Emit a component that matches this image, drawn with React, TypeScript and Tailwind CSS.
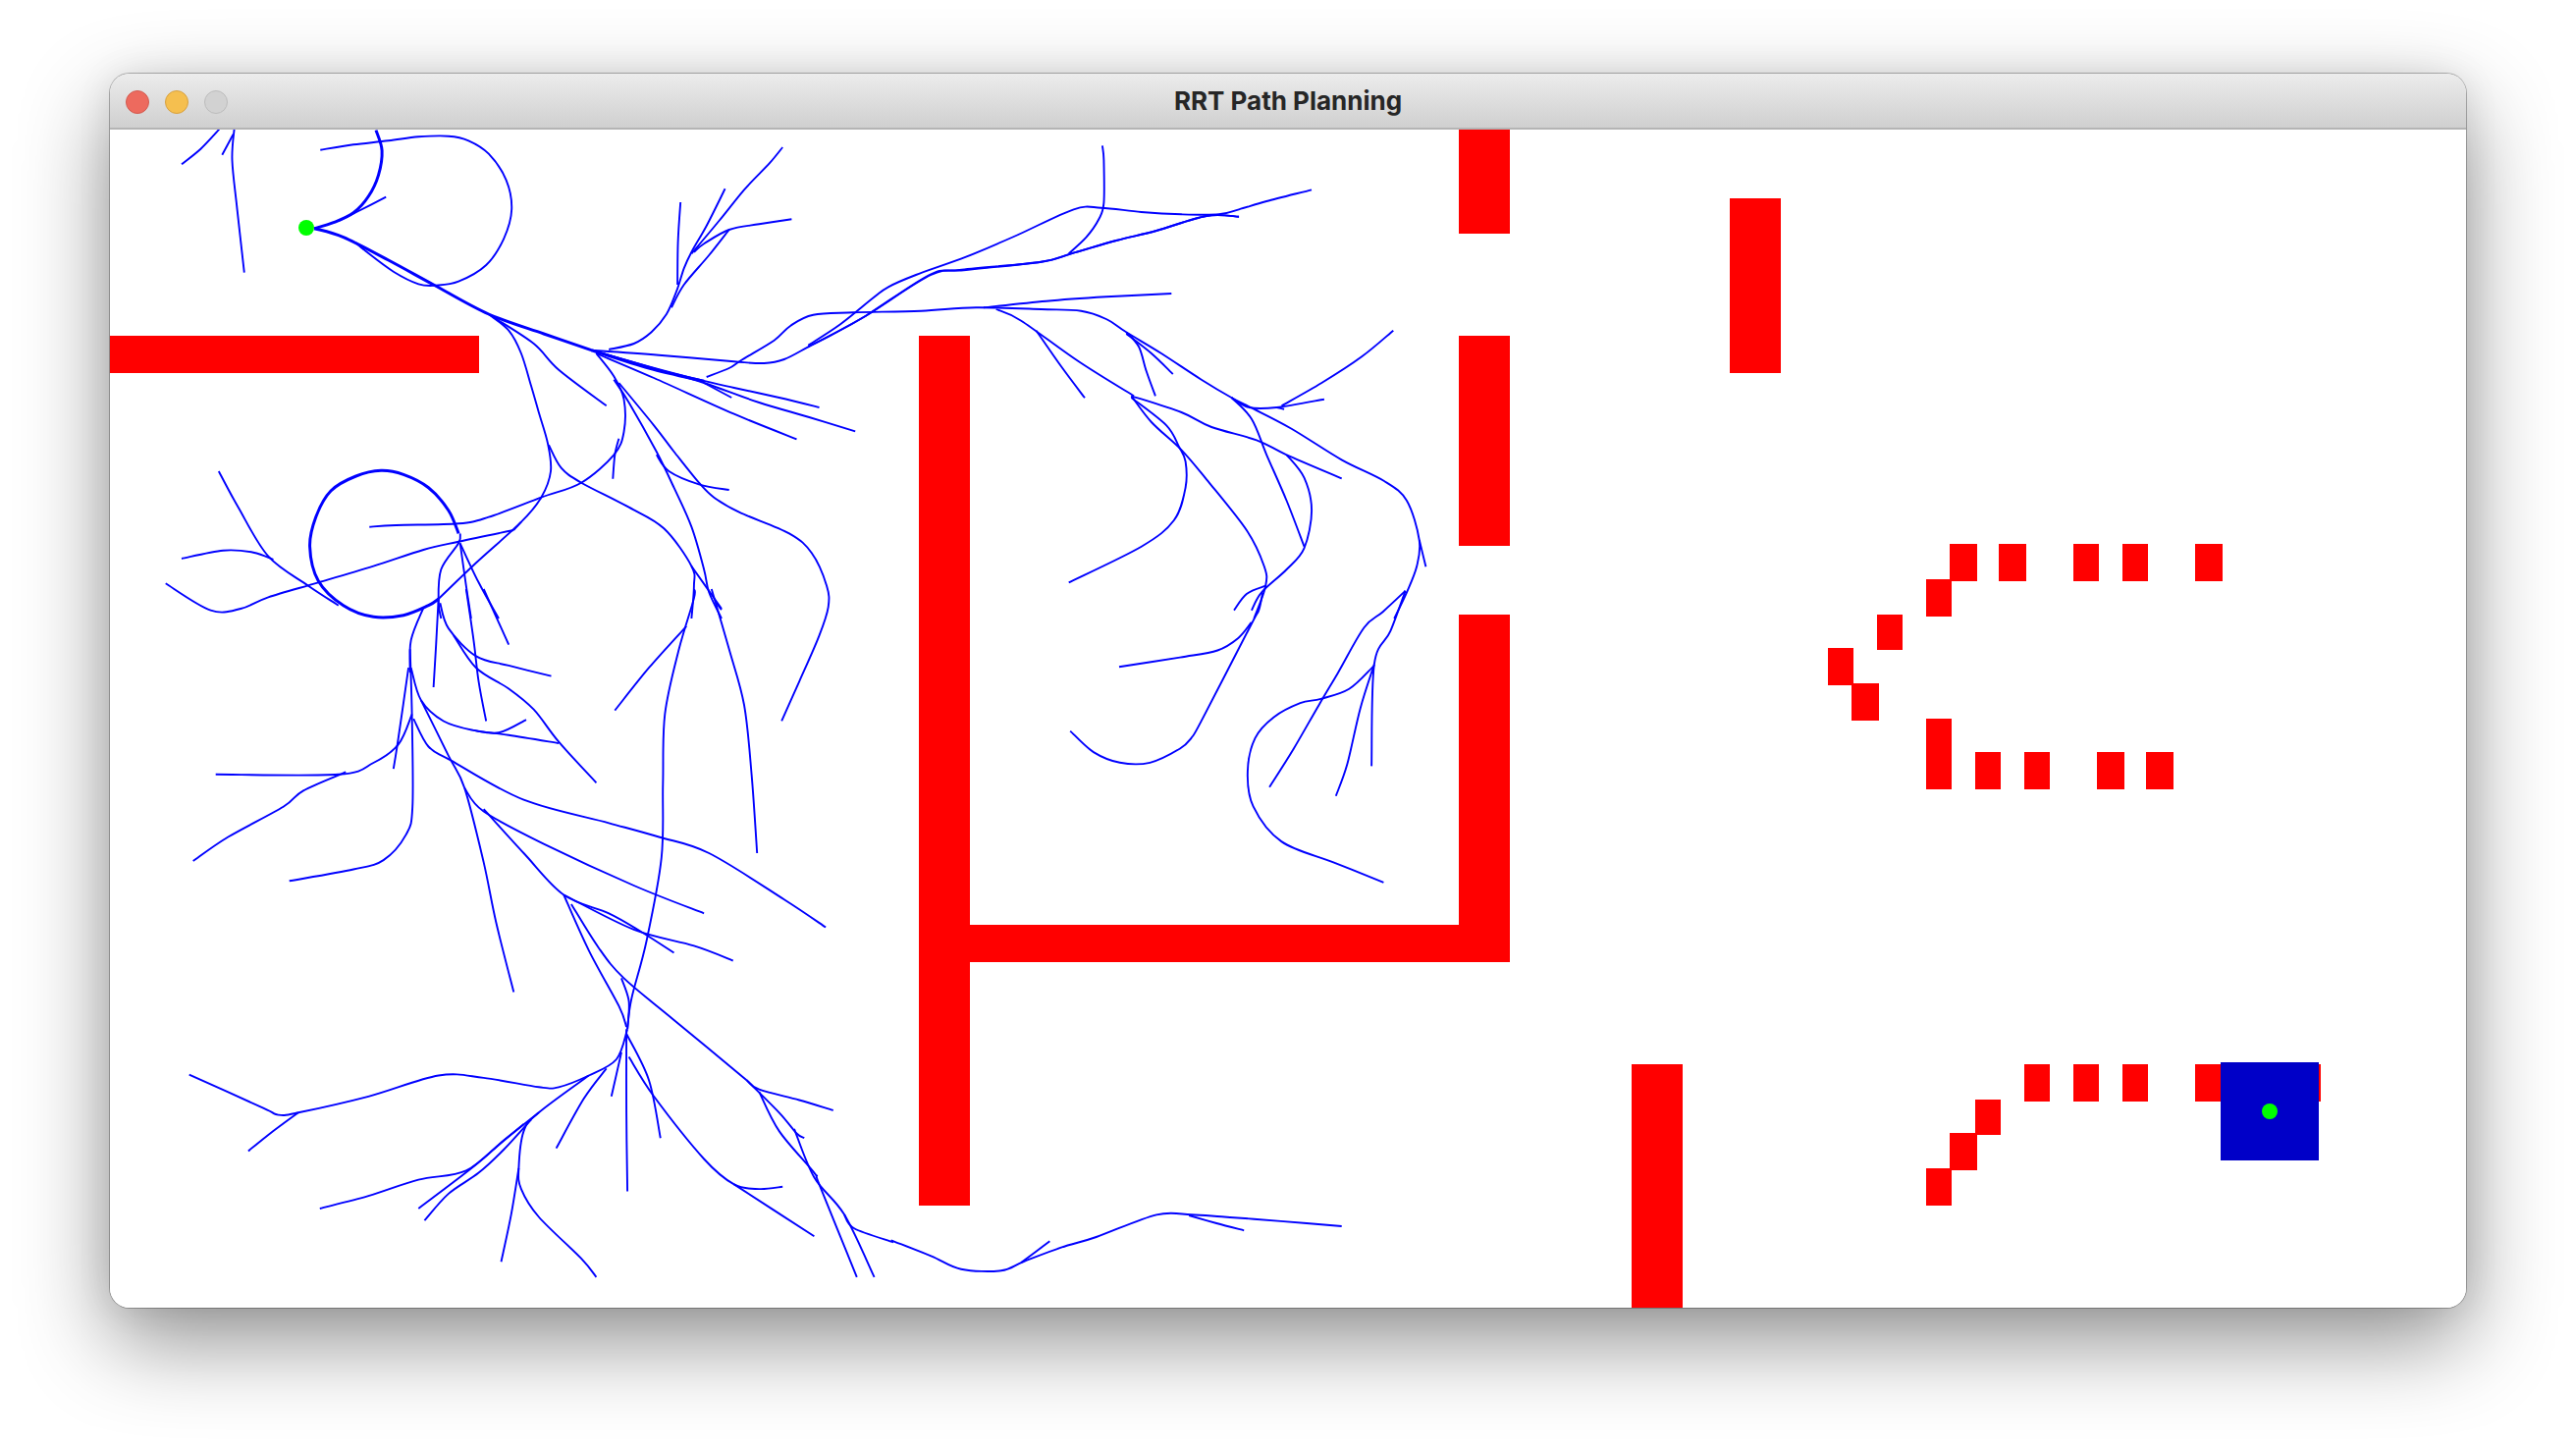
type Pt = [number, number]

// tree branches are noted per zoomed crop, then mapped to page pixels
const z2 = (p: Pt[]): Pt[] => p.map(([x, y]) => [110 + x / 1.96, 130 + y / 3])
const z3 = (p: Pt[]): Pt[] => p.map(([x, y]) => [110 + x / 1.96, 600 + y / 2.119])
const z4 = (p: Pt[]): Pt[] => p.map(([x, y]) => [780 + x / 1.96, 130 + y / 3])
const z5 = (p: Pt[]): Pt[] => p.map(([x, y]) => [980 + x / 2.613, 400 + y / 2.8])
const z6 = (p: Pt[]): Pt[] => p.map(([x, y]) => [780 + x / 1.96, 1000 + y / 3])

const thin: Pt[][] = [
  // top left
  z2([[222, 5], [185, 65], [147, 112]]),
  z2([[252, 5], [248, 100], [258, 250], [272, 443]]),
  z2([[250, 20], [228, 83]]),
  z2([[460, 285], [500, 255], [555, 212]]),
  z2([[424, 68], [490, 52], [560, 40], [620, 28], [680, 26], [720, 40], [760, 80], [795, 160], [806, 250], [790, 340], [755, 420], [700, 470], [655, 482], [620, 478], [570, 440], [515, 378], [495, 352]]),
  // hub, up and right
  z2([[1000, 678], [1050, 660], [1085, 625], [1115, 570], [1135, 500], [1150, 430], [1165, 380], [1195, 300], [1232, 187]]),
  z2([[1143, 228], [1138, 350], [1137, 480]]),
  z2([[1347, 60], [1320, 110], [1270, 190], [1220, 285], [1165, 385]]),
  z2([[1365, 280], [1300, 295], [1240, 312], [1190, 355], [1170, 380]]),
  z2([[1240, 312], [1200, 390], [1150, 480], [1125, 550]]),
  z2([[965, 680], [1100, 695], [1250, 715], [1310, 720], [1350, 708], [1398, 670], [1443, 635], [1513, 575], [1640, 450], [1700, 435], [1863, 410], [1923, 385], [2013, 345], [2093, 315], [2193, 270], [2258, 272]]),
  z2([[1195, 762], [1240, 735], [1265, 710], [1330, 650], [1363, 605], [1408, 572], [1488, 565], [1623, 560], [1733, 550], [1863, 555], [1943, 560], [1993, 585], [2033, 625], [2103, 690], [2183, 770], [2243, 825], [2288, 860], [2363, 920], [2463, 1015], [2548, 1080], [2593, 1140], [2618, 1260], [2613, 1340], [2593, 1420], [2568, 1500]]),
  z2([[1398, 665], [1463, 600], [1528, 520], [1558, 487], [1613, 450], [1713, 395], [1813, 330], [1928, 250], [1983, 245], [2063, 258], [2143, 265], [2218, 265], [2258, 250], [2313, 225], [2403, 190]]),
  z2([[1190, 780], [1245, 825]]),
  z2([[965, 680], [1080, 730], [1180, 770], [1250, 795], [1340, 825], [1420, 855]]),
  z2([[965, 680], [1100, 740], [1190, 780], [1300, 840], [1400, 885], [1492, 928]]),
  z2([[975, 690], [1090, 765], [1250, 875], [1375, 952]]),
  // down from the first fork
  z2([[760, 570], [800, 620], [825, 690], [845, 790], [860, 870], [878, 965], [884, 1050], [865, 1130], [825, 1205], [735, 1330], [660, 1440]]),
  z2([[770, 580], [850, 660], [900, 740], [995, 850]]),
  z2([[975, 690], [1010, 760], [1030, 830], [1030, 930], [1010, 1000], [945, 1085], [865, 1130], [760, 1190], [700, 1210], [575, 1215], [522, 1220]]),
  z2([[1020, 950], [1012, 1000], [1008, 1073]]),
  z2([[1010, 770], [1040, 840], [1095, 990], [1130, 1100], [1165, 1220], [1190, 1350], [1200, 1420], [1225, 1500]]),
  z2([[1165, 1340], [1225, 1470]]),
  z2([[1020, 780], [1090, 910], [1130, 990], [1180, 1085], [1210, 1130], [1260, 1175], [1360, 1240], [1405, 1300], [1435, 1400], [1438, 1465], [1420, 1552], [1380, 1693], [1345, 1813]]),
  z2([[1095, 1000], [1120, 1050], [1180, 1090], [1240, 1107]]),
  z2([[880, 970], [905, 1040], [945, 1085], [1040, 1160], [1110, 1225], [1165, 1340], [1170, 1400], [1165, 1500]]),
  // left loop
  z2([[703, 1240], [700, 1270], [665, 1350], [660, 1450], [665, 1500]]),
  z2([[810, 1230], [700, 1265], [630, 1290], [530, 1340], [420, 1390], [320, 1435], [265, 1470], [205, 1475], [115, 1393]]),
  z2([[825, 1205], [810, 1230]]),
  z2([[221, 1050], [260, 1160], [320, 1310], [400, 1400], [460, 1460]]),
  z2([[147, 1317], [230, 1292], [290, 1298], [330, 1320]]),
  z2([[703, 1270], [715, 1400], [725, 1500]]),
  z2([[703, 1270], [740, 1390], [780, 1500]]),
  // lower left
  z3([[663, 30], [680, 85], [735, 145], [800, 165], [885, 188]]),
  z3([[660, 20], [655, 120], [650, 212]]),
  z3([[690, 100], [735, 170], [800, 215], [850, 260], [900, 330], [975, 418]]),
  z3([[715, 0], [730, 110], [740, 200], [755, 285]]),
  z3([[750, 0], [800, 120]]),
  z3([[630, 40], [605, 110], [603, 180]]),
  z3([[603, 130], [607, 280], [608, 470], [595, 530], [550, 585], [490, 605], [362, 630]]),
  z3([[605, 170], [625, 240], [670, 285], [730, 305], [800, 315], [900, 333]]),
  z3([[730, 305], [780, 310], [835, 282]]),
  z3([[600, 170], [580, 320], [570, 388]]),
  z3([[607, 270], [580, 335], [530, 375], [460, 400], [215, 400]]),
  z3([[475, 395], [390, 435], [350, 470], [240, 535], [170, 587]]),
  z3([[610, 280], [640, 340], [685, 370], [830, 455], [1000, 505], [1100, 535], [1200, 570], [1350, 670], [1433, 730]]),
  z3([[625, 240], [680, 360], [712, 430], [750, 590], [775, 720], [810, 870]]),
  z3([[712, 430], [750, 480], [870, 550], [1050, 640], [1190, 700]]),
  z3([[750, 475], [830, 570], [910, 660], [1000, 700], [1065, 740], [1130, 785]]),
  z3([[910, 660], [1050, 735], [1170, 770], [1248, 802]]),
  z3([[910, 660], [960, 780], [1020, 900], [1035, 945]]),
  z3([[925, 680], [980, 775], [1030, 840], [1130, 930], [1275, 1060]]),
  z3([[1025, 840], [1040, 890], [1037, 950]]),
  z3([[1037, 950], [1045, 885], [1075, 760], [1105, 580], [1108, 420], [1112, 270], [1140, 130], [1170, 20], [1170, 0]]),
  z3([[1155, 80], [1080, 170], [1012, 262]]),
  z3([[1205, 0], [1240, 130], [1270, 250], [1285, 400], [1296, 570]]),
  z3([[1215, 30], [1225, 45]]),
  // lower hub
  z3([[1037, 950], [1015, 1015], [960, 1050], [900, 1075], [860, 1075], [750, 1055], [660, 1050], [520, 1095], [380, 1130], [340, 1135], [310, 1120], [162, 1048]]),
  z3([[380, 1130], [330, 1170], [280, 1213]]),
  z3([[995, 1035], [950, 1100], [895, 1207]]),
  z3([[1025, 1000], [1005, 1095]]),
  z3([[1035, 950], [1035, 1130], [1037, 1300]]),
  z3([[1035, 960], [1080, 1060], [1103, 1185]]),
  z3([[1040, 1010], [1090, 1095], [1190, 1230], [1250, 1285], [1300, 1295], [1347, 1290]]),
  z3([[1250, 1285], [1410, 1397]]),
  z3([[960, 1050], [860, 1130], [830, 1170], [820, 1250], [825, 1295], [860, 1355], [945, 1445], [975, 1485]]),
  z3([[820, 1250], [805, 1350], [785, 1452]]),
  z3([[860, 1130], [790, 1190], [715, 1255], [620, 1275], [520, 1310], [423, 1337]]),
  z3([[830, 1155], [780, 1200], [720, 1255], [620, 1337]]),
  z3([[845, 1145], [790, 1210], [740, 1260], [680, 1305], [632, 1363]]),
  z3([[1275, 1060], [1300, 1080], [1380, 1103], [1448, 1125]]),
  z3([[1275, 1060], [1340, 1130], [1375, 1175], [1390, 1185]]),
  z3([[1300, 1085], [1340, 1170], [1410, 1260], [1420, 1285], [1495, 1485]]),
  z3([[1370, 1165], [1410, 1270], [1470, 1350], [1530, 1485]]),
  z3([[1470, 1350], [1490, 1380], [1568, 1410]]),
  // bottom run to the right
  z6([[250, 790], [330, 838], [390, 878], [470, 883], [515, 855], [590, 812], [660, 780], [780, 712], [850, 712], [910, 718], [975, 725], [1080, 738], [1150, 747]]),
  z6([[510, 858], [567, 793]]),
  z6([[845, 714], [900, 738], [955, 760]]),
  // middle chamber
  z4([[605, 385], [640, 335], [665, 280], [675, 230], [675, 100], [672, 55]]),
  z4([[85, 670], [200, 575], [330, 450], [400, 435], [550, 410], [610, 385], [700, 345], [780, 315], [880, 270], [945, 272]]),
  z4([[435, 550], [560, 530], [680, 517], [810, 507]]),
  z4([[460, 555], [510, 590], [625, 715], [735, 820]]),
  z4([[540, 620], [590, 730], [637, 826]]),
  z4([[720, 625], [745, 670], [760, 745], [778, 820]]),
  z4([[720, 630], [770, 690], [813, 753]]),
  z4([[1305, 1260], [1318, 1342]]),
  z4([[930, 825], [965, 855], [1020, 855], [1115, 830]]),
  z4([[1020, 855], [1035, 860]]),
  z4([[1030, 850], [1110, 780], [1190, 700], [1253, 620]]),
  z4([[930, 825], [970, 890], [1000, 1000], [1040, 1140], [1075, 1280]]),
  z4([[730, 820], [830, 870], [890, 915], [980, 955], [1040, 1000], [1150, 1072]]),
  z4([[1040, 1000], [1075, 1070], [1090, 1170], [1075, 1285], [1040, 1350], [990, 1420], [970, 1475]]),
  z4([[730, 820], [770, 900], [830, 985], [880, 1075], [960, 1230], [995, 1340], [998, 1400], [975, 1500]]),
  z4([[998, 1400], [960, 1425], [935, 1475]]),
  z4([[730, 825], [800, 910], [825, 975], [838, 1020], [838, 1100], [815, 1200], [750, 1280], [605, 1390]]),
  z5([[800, 570], [790, 620], [770, 660], [640, 930], [610, 985], [580, 1015], [500, 1055], [420, 1055], [350, 1025], [288, 965]]),
  z5([[770, 655], [735, 700], [680, 735], [580, 755], [418, 782]]),
  z5([[1180, 565], [1120, 625], [1070, 670], [1000, 800], [950, 890], [880, 1020], [818, 1125]]),
  z5([[1180, 565], [1140, 680], [1097, 775], [1090, 1065]]),
  z5([[1097, 775], [1060, 900], [1025, 1060], [995, 1150]]),
  z5([[1095, 780], [1030, 845], [955, 873], [900, 885], [830, 925], [780, 985], [760, 1080], [775, 1180], [850, 1280], [990, 1340], [1122, 1397]]),
]

const heavy: Pt[][] = [
  z2([[412, 308], [450, 290], [490, 260], [520, 210], [540, 145], [547, 70], [535, 8]]),
  z2([[412, 308], [470, 335], [560, 405], [650, 480], [760, 570], [870, 630], [965, 680]]),
  z2([[965, 680], [1080, 735], [1190, 775]]),
  z2([[700, 1240], [680, 1170], [640, 1100], [590, 1060], [545, 1048], [495, 1065], [445, 1110], [415, 1190], [403, 1280], [420, 1385], [470, 1460], [530, 1495], [590, 1490], [640, 1460], [660, 1440]]),
]

// reds are [left, top, right, bottom] in page pixels
const walls: [number, number, number, number][] = [
  [112, 342, 488, 380],
  [936, 342, 988, 1228],
  [988, 942, 1486, 980],
  [1486, 132, 1538, 238],
  [1486, 342, 1538, 556],
  [1486, 626, 1538, 980],
  [1762, 202, 1814, 380],
  [1662, 1084, 1714, 1332],
  [1986, 554, 2014, 592],
  [2036, 554, 2064, 592],
  [2112, 554, 2138, 592],
  [2162, 554, 2188, 592],
  [2236, 554, 2264, 592],
  [1962, 590, 1988, 628],
  [1912, 626, 1938, 662],
  [1862, 660, 1888, 698],
  [1886, 696, 1914, 734],
  [1962, 732, 1988, 804],
  [2012, 766, 2038, 804],
  [2062, 766, 2088, 804],
  [2136, 766, 2164, 804],
  [2186, 766, 2214, 804],
  [2062, 1084, 2088, 1122],
  [2112, 1084, 2138, 1122],
  [2162, 1084, 2188, 1122],
  [2236, 1084, 2364, 1122],
  [2012, 1120, 2038, 1156],
  [1986, 1154, 2014, 1192],
  [1962, 1190, 1988, 1228],
]

// Catmull-Rom through the noted points
function smooth(p: Pt[]) {
  let d = `M${p[0][0].toFixed(1)} ${p[0][1].toFixed(1)}`
  for (let i = 0; i < p.length - 1; i++) {
    const a = p[Math.max(i - 1, 0)]
    const b = p[i]
    const c = p[i + 1]
    const e = p[Math.min(i + 2, p.length - 1)]
    const c1x = b[0] + (c[0] - a[0]) / 6
    const c1y = b[1] + (c[1] - a[1]) / 6
    const c2x = c[0] - (e[0] - b[0]) / 6
    const c2y = c[1] - (e[1] - b[1]) / 6
    d += `C${c1x.toFixed(1)} ${c1y.toFixed(1)} ${c2x.toFixed(1)} ${c2y.toFixed(1)} ${c[0].toFixed(1)} ${c[1].toFixed(1)}`
  }
  return d
}

function Canvas() {
  return (
    <svg viewBox="112 132 2400 1200" className="block w-[2400px] h-[1200px] bg-white">
      {walls.map(([l, t, r, b], i) => (
        <rect key={i} x={l} y={t} width={r - l} height={b - t} fill="#ff0000" />
      ))}
      <rect x={2262} y={1082} width={100} height={100} fill="#0000c8" />
      <g fill="none" stroke="#0000ff" strokeLinejoin="round">
        {thin.map((p, i) => (
          <path key={i} d={smooth(p)} strokeWidth={1.9} />
        ))}
        {heavy.map((p, i) => (
          <path key={i} d={smooth(p)} strokeWidth={3} />
        ))}
      </g>
      <circle cx={312} cy={232} r={8} fill="#00ff00" />
      <circle cx={2312} cy={1132} r={8} fill="#00ff00" />
    </svg>
  )
}

export default function App() {
  return (
    <div className="w-[2624px] h-[1480px] bg-white pl-[112px] pt-[75px] overflow-hidden">
      <div className="w-[2400px] rounded-[20px] shadow-[0_0_0_1px_rgba(0,0,0,0.28),0_34px_90px_rgba(0,0,0,0.44),0_0_36px_rgba(0,0,0,0.08)]">
        <div className="rounded-[20px] overflow-hidden">
          <header className="relative h-[57px] flex items-center justify-center bg-gradient-to-b from-[#ececec] to-[#d0d0d0] border-b-2 border-[#b4b4b4]">
            <div className="absolute left-[16px] top-[17px] flex gap-[16px]">
              <span className="w-[24px] h-[24px] rounded-full bg-[#ed6a5e] border border-[#d25a4f]" />
              <span className="w-[24px] h-[24px] rounded-full bg-[#f5bf4f] border border-[#d7a140]" />
              <span className="w-[24px] h-[24px] rounded-full bg-[#d2d2d2] border border-[#bcbcbc]" />
            </div>
            <h1 className="font-['Inter',sans-serif] font-bold text-[26px] leading-none text-[#262626]">RRT Path Planning</h1>
          </header>
          <Canvas />
        </div>
      </div>
    </div>
  )
}
